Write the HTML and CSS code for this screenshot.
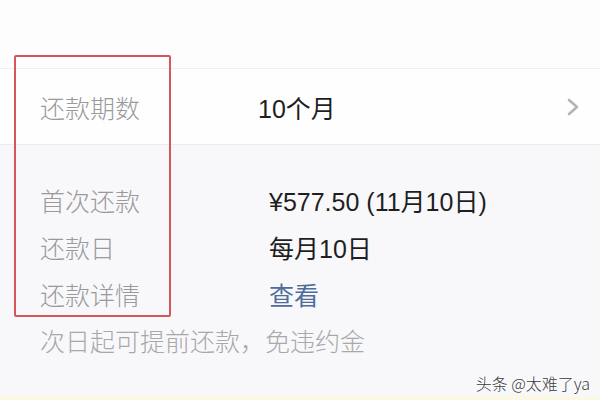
FILE: index.html
```html
<!DOCTYPE html>
<html lang="zh-CN">
<head>
    <meta charset="UTF-8">
    <meta name="viewport" content="width=device-width, initial-scale=1.0">
    <title>还款计划</title>
    <link rel="stylesheet" href="styles.css">
</head>
<body>
    <div class="page">
        <div class="top-space"></div>

        <div class="term-row">
            <span class="label">还款期数</span>
            <span class="term-value">10个月</span>
            <svg class="chevron" width="14" height="18" viewBox="0 0 14 18">
                <path d="M3 2 L11 9 L3 16" fill="none" stroke="#b4b4b8" stroke-width="2.6" stroke-linecap="round" stroke-linejoin="round"/>
            </svg>
        </div>

        <div class="details">
            <div class="detail-row">
                <span class="label">首次还款</span>
                <span class="value">¥577.50 (11月10日)</span>
            </div>
            <div class="detail-row">
                <span class="label">还款日</span>
                <span class="value">每月10日</span>
            </div>
            <div class="detail-row">
                <span class="label">还款详情</span>
                <a class="value link" href="#">查看</a>
            </div>
            <p class="note">次日起可提前还款，免违约金</p>
        </div>

        <div class="bottom-strip"></div>

        <!-- highlight box drawn over the labels -->
        <div class="highlight"></div>
        <div class="watermark">头条 @太难了ya</div>
    </div>
</body>
</html>
```

FILE: styles.css
```css
body {
    margin: 0;
    padding: 0;
    font-family: "Liberation Sans", "Noto Sans CJK SC", sans-serif;
    background: #f8f8fa;
}
.page {
    position: relative;
    width: 600px;
    height: 400px;
    overflow: hidden;
    display: flex;
    flex-direction: column;
}
.top-space {
    height: 68px;
    background: #fdfdfd;
    border-bottom: 1px solid #efeff1;
}
.term-row {
    height: 75px;
    background: #fefefe;
    border-bottom: 1px solid #ececef;
    display: flex;
    align-items: center;
    padding: 0 20px 0 40px;
    font-size: 25px;
}
.label {
    width: 218px;
    color: #9a9a9c;
    font-family: "Noto Sans CJK SC", sans-serif;
    font-weight: 300;
}
.term-value {
    flex: 1;
    color: #1f1f22;
}
.chevron {
    display: block;
}
.details {
    flex: 1;
    background: #f8f8fa;
    padding: 31px 0 0 40px;
    font-size: 25px;
}
.detail-row {
    display: flex;
    align-items: center;
    height: 47px;
}
.detail-row .label {
    width: 229px;
}
.value {
    color: #1f1f22;
}
.link {
    color: #4d6d9c;
    text-decoration: none;
    font-family: "Noto Sans CJK SC", sans-serif;
}
.note {
    margin: 0;
    height: 47px;
    line-height: 47px;
    color: #a8a8ab;
    font-family: "Noto Sans CJK SC", sans-serif;
    font-weight: 300;
}
.bottom-strip {
    height: 4px;
    background: #fbf8e6;
}
.highlight {
    position: absolute;
    left: 14px;
    top: 55px;
    width: 153px;
    height: 258px;
    border: 2px solid #d6575a;
    border-radius: 2px;
}
.watermark {
    position: absolute;
    right: 10px;
    bottom: 5px;
    font-size: 16px;
    color: #3a3a3a;
    font-family: "Noto Sans CJK SC", sans-serif;
    font-weight: 300;
    text-shadow: 0 0 2px #fff, 0 0 2px #fff;
}
```
